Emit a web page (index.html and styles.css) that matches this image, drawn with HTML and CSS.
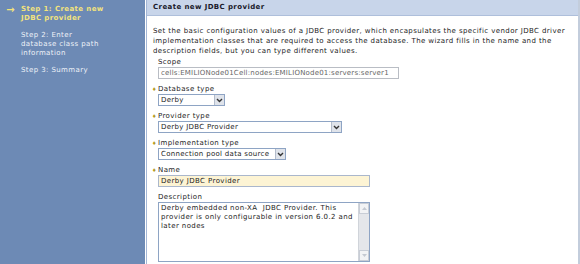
FILE: index.html
```html
<!DOCTYPE html>
<html lang="en">
<head>
  <meta charset="UTF-8">
  <title>Create new JDBC provider</title>
  <link rel="stylesheet" href="styles.css">
</head>
<body>
  <div class="sidebar">
    <div class="step current">
      <span class="arrow-mark">&rarr;</span>
      <span>Step 1: Create new JDBC provider</span>
    </div>
    <div class="step">
      <span class="arrow-mark"></span>
      <span>Step 2: Enter database class path information</span>
    </div>
    <div class="step">
      <span class="arrow-mark"></span>
      <span>Step 3: Summary</span>
    </div>
  </div>

  <div class="main">
    <div class="panel-title">Create new JDBC provider</div>
    <div class="panel-body">
      <p class="intro">Set the basic configuration values of a JDBC provider, which encapsulates the specific vendor JDBC driver implementation classes that are required to access the database. The wizard fills in the name and the description fields, but you can type different values.</p>

      <div class="field">
        <div class="label">Scope</div>
        <input class="text scope" type="text" value="cells:EMILIONode01Cell:nodes:EMILIONode01:servers:server1" readonly>
      </div>

      <div class="field">
        <div class="label"><span class="req">&#9830;</span>Database type</div>
        <div class="select w-db">
          <select><option>Derby</option></select>
          <span class="drop"><svg width="7" height="5" viewBox="0 0 7 5"><path d="M1 1 L3.5 3.5 L6 1" fill="none" stroke="#333" stroke-width="1.4"/></svg></span>
        </div>
      </div>

      <div class="field">
        <div class="label"><span class="req">&#9830;</span>Provider type</div>
        <div class="select w-provider">
          <select><option>Derby JDBC Provider</option></select>
          <span class="drop"><svg width="7" height="5" viewBox="0 0 7 5"><path d="M1 1 L3.5 3.5 L6 1" fill="none" stroke="#333" stroke-width="1.4"/></svg></span>
        </div>
      </div>

      <div class="field">
        <div class="label"><span class="req">&#9830;</span>Implementation type</div>
        <div class="select w-impl">
          <select><option>Connection pool data source</option></select>
          <span class="drop"><svg width="7" height="5" viewBox="0 0 7 5"><path d="M1 1 L3.5 3.5 L6 1" fill="none" stroke="#333" stroke-width="1.4"/></svg></span>
        </div>
      </div>

      <div class="field">
        <div class="label"><span class="req">&#9830;</span>Name</div>
        <input class="text name" type="text" value="Derby JDBC Provider">
      </div>

      <div class="field">
        <div class="label">Description</div>
        <div class="textarea">
          <div class="textarea-text">Derby embedded non-XA &nbsp;JDBC Provider. This provider is only configurable in version 6.0.2 and later nodes</div>
          <div class="scroll">
            <span class="scroll-btn"><svg width="5" height="3" viewBox="0 0 5 3"><path d="M0 3 L2.5 0 L5 3 Z" fill="#c4c9d2"/></svg></span>
            <span class="scroll-btn"><svg width="5" height="3" viewBox="0 0 5 3"><path d="M0 0 L2.5 3 L5 0 Z" fill="#c4c9d2"/></svg></span>
          </div>
        </div>
      </div>
    </div>
  </div>
</body>
</html>
```

FILE: styles.css
```css
body {
  margin: 0;
  display: flex;
  min-height: 100vh;
  background-color: #ffffff;
  font-family: "DejaVu Sans", Verdana, sans-serif;
  font-size: 7px;
  letter-spacing: 0.4px;
  color: #1c1c1c;
}

/* left wizard steps */
.sidebar {
  width: 145px;
  background-color: #6d8ab5;
  padding-top: 5px;
  box-sizing: border-box;
}
.step {
  display: flex;
  color: #eef2f8;
  line-height: 9px;
  margin-bottom: 8px;
  padding-right: 40px;
}
.step.current {
  color: #f3e37c;
  font-weight: bold;
}
.arrow-mark {
  width: 21px;
  flex-shrink: 0;
  text-align: center;
  font-size: 10px;
  font-weight: bold;
  letter-spacing: 0;
}

/* content panel */
.main {
  flex: 1;
  margin-left: 1px;
  border-left: 1px solid #a3b6d6;
  border-right: 2px solid #c3cddc;
}
.panel-title {
  background-color: #c8d5ea;
  border-bottom: 1px solid #aebfdb;
  height: 15px;
  line-height: 15px;
  padding-left: 6px;
  font-weight: bold;
  color: #1a1a2a;
}
.panel-body {
  padding: 10px 6px 0 6px;
}
.intro {
  margin: 0 0 1px 0;
  line-height: 10px;
}

.field {
  padding-left: 5px;
  margin-bottom: 5px;
}
.label {
  line-height: 10px;
  height: 10px;
}
.req {
  display: inline-block;
  width: 6px;
  margin-left: -6px;
  color: #b49a1e;
  font-size: 5px;
}

.text {
  display: block;
  box-sizing: border-box;
  height: 12px;
  padding: 0 2px;
  font-family: "DejaVu Sans", Verdana, sans-serif;
  font-size: 7px;
  letter-spacing: 0.2px;
  border: 1px solid #8ea4c4;
  outline: none;
}
.scope {
  width: 241px;
  color: #666666;
  border-color: #b9bdc4;
  background-color: #ffffff;
}
.name {
  width: 212px;
  background-color: #fdf4d4;
  border-color: #aab7cc;
  color: #1c1c1c;
  letter-spacing: 0.4px;
}

.select {
  display: flex;
  box-sizing: border-box;
  height: 12px;
  border: 1px solid #8ea4c4;
  background-color: #ffffff;
}
.select select {
  flex: 1;
  min-width: 0;
  appearance: none;
  border: none;
  background: transparent;
  padding: 0 2px;
  margin: 0;
  height: 10px;
  font-family: "DejaVu Sans", Verdana, sans-serif;
  font-size: 7px;
  letter-spacing: 0.3px;
  color: #1c1c1c;
  outline: none;
}
.drop {
  width: 9px;
  display: flex;
  align-items: center;
  justify-content: center;
  background-color: #dfe3ea;
  border-left: 1px solid #b3bccb;
}
.w-db { width: 67px; }
.w-provider { width: 184px; }
.w-impl { width: 128px; }

.textarea {
  display: flex;
  box-sizing: border-box;
  width: 212px;
  height: 60px;
  border: 1px solid #8ea4c4;
}
.textarea-text {
  flex: 1;
  padding: 1px 2px;
  line-height: 9px;
}
.scroll {
  width: 10px;
  display: flex;
  flex-direction: column;
  justify-content: space-between;
  background-color: #e4e6ea;
  border-left: 1px solid #d0d4da;
}
.scroll-btn {
  height: 9px;
  display: flex;
  align-items: center;
  justify-content: center;
  background-color: #f2f3f5;
  border: 1px solid #c8cdd6;
}
```
